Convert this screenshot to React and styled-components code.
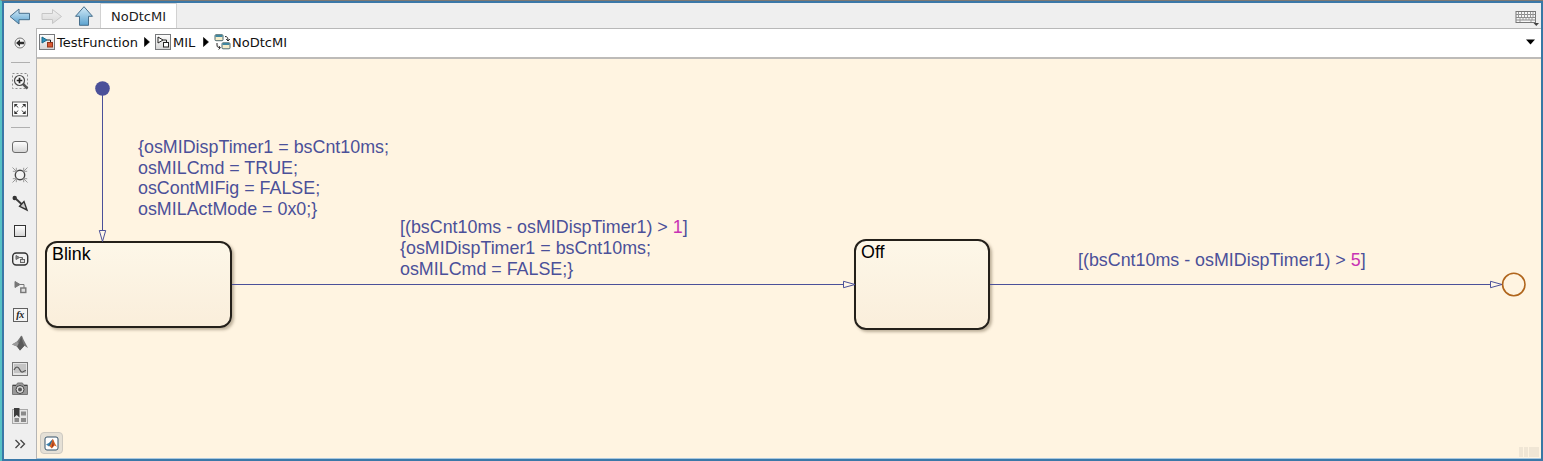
import React from 'react';
import styled, { createGlobalStyle } from 'styled-components';

const GlobalStyle = createGlobalStyle`
  * { box-sizing: border-box; }
  html, body { margin: 0; padding: 0; overflow: hidden; }
  svg { display: block; }
`;

const INK = '#4b5099';

const Window = styled.div`
  width: 1543px;
  height: 461px;
  display: flex;
  flex-direction: column;
  background: #efefef;
  border-left: 2px solid #57c2c6;
  border-top: 1px solid #7d7974;
  font-family: "DejaVu Sans", sans-serif;
`;

const Frame = styled.div`
  flex: 1;
  min-height: 0;
  display: flex;
  flex-direction: column;
  border: 2px solid #3a78a8;
  border-right-color: #3878a5;
`;

const TabBar = styled.div`
  height: 25px;
  flex: none;
  display: flex;
  align-items: stretch;
`;

const NavButtons = styled.div`
  width: 96px;
  display: flex;
  align-items: center;
  padding: 1px 0 0 5px;
  gap: 10px;
`;

const Tab = styled.div`
  width: 77px;
  border: 1px solid #d2d2d2;
  border-bottom: 0;
  background: #fff;
  font-size: 13px;
  line-height: 26px;
  text-align: center;
  color: #1c1c1c;
`;

const KeyboardSlot = styled.div`
  margin-left: auto;
  padding: 6px 2px 0 0;
`;

const Body = styled.div`
  flex: 1;
  min-height: 0;
  display: flex;
`;

const Palette = styled.div`
  width: 33px;
  flex: none;
  display: flex;
  flex-direction: column;
  align-items: center;
  border-right: 1px solid #b5b5b5;
`;

const Tool = styled.div`
  height: ${(p) => p.$h || 28}px;
  width: 100%;
  flex: none;
  display: flex;
  align-items: center;
  justify-content: center;
  margin-bottom: ${(p) => p.$gap || 0}px;
`;

const Divider = styled.div`
  width: 19px;
  height: 1px;
  margin: 4px 0 ${(p) => p.$after}px;
  flex: none;
  background: #b0b0b0;
`;

const Editor = styled.div`
  flex: 1;
  min-width: 0;
  display: flex;
  flex-direction: column;
`;

const PathBar = styled.div`
  height: 31px;
  flex: none;
  display: flex;
  align-items: center;
  background: #fff;
  border-top: 1px solid #b8b8b8;
  border-bottom: 2px solid #bdbbb8;
  padding: 0 6px 2px 2px;
`;

const Crumb = styled.div`
  display: flex;
  align-items: center;
  gap: ${(p) => (p.$gap === undefined ? 2 : p.$gap)}px;
  width: ${(p) => p.$w}px;
  padding-left: ${(p) => p.$pl || 0}px;
  font-size: 13px;
  color: #111;
  white-space: nowrap;
`;

const Caret = styled.div`
  margin-left: auto;
`;

const Canvas = styled.div`
  flex: 1;
  min-height: 0;
  position: relative;
  background: #fff4e1;
  font-family: "Liberation Sans", Arial, sans-serif;
  border-bottom: 1px solid #a9c8e0;
`;

const State = styled.div`
  position: absolute;
  left: ${(p) => p.$x}px;
  top: ${(p) => p.$y}px;
  width: ${(p) => p.$w}px;
  height: ${(p) => p.$h}px;
  border: 2px solid #24201a;
  border-radius: 12px;
  background: linear-gradient(#fdf7e8, #faeedb);
  box-shadow: 2px 2px 3px rgba(90, 75, 50, 0.4);
  padding: 1px 5px;
  font-size: 17.85px;
  line-height: 20px;
  color: #000;
`;

const Wires = styled.svg`
  position: absolute;
  left: 0;
  top: 0;
`;

const Label = styled.div`
  position: absolute;
  left: ${(p) => p.$x}px;
  top: ${(p) => p.$y}px;
  font-size: 17.86px;
  line-height: 20.7px;
  color: ${INK};
  white-space: pre;
`;

const Num = styled.span`
  color: #c832b4;
`;

const Badge = styled.div`
  position: absolute;
  left: 3px;
  bottom: 4px;
  width: 23px;
  height: 22px;
  display: flex;
  align-items: center;
  justify-content: center;
  border: 1px solid #cdc9c1;
  border-radius: 4px;
  background: #e5e0d6;
`;

const Grip = styled.div`
  position: absolute;
  right: 2px;
  bottom: 1px;
  display: flex;
  gap: 1px;
`;

const GripCell = styled.div`
  width: ${(p) => p.$w}px;
  height: 10px;
  background: #f0e6d5;
`;

const Icon = ({ w = 18, h = 18, children }) => (
  <svg width={w} height={h} viewBox={`0 0 ${w} ${h}`} fill="none">{children}</svg>
);

const Gradients = () => (
  <svg width="0" height="0">
    <defs>
      <linearGradient id="blue" x1="0" y1="0" x2="0" y2="1">
        <stop offset="0" stopColor="#d3ebf8" /><stop offset="1" stopColor="#5ba2cf" />
      </linearGradient>
      <linearGradient id="pale" x1="0" y1="0" x2="0" y2="1">
        <stop offset="0" stopColor="#f1f1f1" /><stop offset="1" stopColor="#d9d9d9" />
      </linearGradient>
      <linearGradient id="grey" x1="0" y1="0" x2="0" y2="1">
        <stop offset="0" stopColor="#ffffff" /><stop offset="1" stopColor="#d4d4d4" />
      </linearGradient>
    </defs>
  </svg>
);

const Hidden = styled.div`
  height: 0;
  overflow: hidden;
`;

const BackArrow = () => (
  <Icon w={22} h={17}><path d="M1 8.500 10 1v4.300h10.500v6.400H10V16z" fill="url(#blue)" stroke="#476f8c" strokeLinejoin="round" /></Icon>
);
const ForwardArrow = () => (
  <Icon w={22} h={17}><path d="M20.500 8.500 11.500 1.500v4H1v6h10.500v4z" fill="url(#pale)" stroke="#c6c6c6" strokeLinejoin="round" /></Icon>
);
const UpArrow = () => (
  <Icon w={21} h={20}><path d="M11 .7 19.500 10.300h-4v9H6.500v-9h-4z" fill="url(#blue)" stroke="#476f8c" strokeLinejoin="round" /></Icon>
);
const Keyboard = () => (
  <Icon w={24} h={17}>
    <rect x="1" y="2.500" width="19.500" height="11" fill="#f7f7f7" stroke="#777" />
    <path d="M1 5.500h19.500M1 8.500h19.500M1 11h19.500" stroke="#8a8a8a" />
    <path d="M3.500 3v5M6.500 3v5M9.500 3v5M12.500 3v5M15.500 3v5M18 3v5M5 8v3M8 8v3M11 8v3M14 8v3M17 8v3M5 11v2M16 11v2" stroke="#9a9a9a" />
    <path d="M18.500 14h5.500l-2.700 3z" fill="#444" />
  </Icon>
);

const ModelIcon = ({ color }) => (
  <Icon w={16} h={16}>
    <rect x=".5" y=".5" width="15" height="15" fill="url(#grey)" stroke="#77797c" />
    <path d="M3 3v6l5-3z" fill={color ? '#2d91bd' : '#fff'} stroke={color ? '#1b6888' : '#222'} />
    <path d="M8 6h3.500v3" stroke="#222" />
    <rect x="8.500" y="8.500" width="5" height="4.500" fill={color ? '#d95a32' : '#fff'} stroke={color ? '#94351b' : '#222'} />
  </Icon>
);
const ChartIcon = () => (
  <Icon w={17} h={16}>
    <rect x="1" y=".7" width="8" height="6" rx="1" fill="#f5edcb" stroke="#4f6b70" />
    <path d="M1.500 2h7" stroke="#3f86a0" strokeWidth="2" />
    <rect x="8" y="8.800" width="8" height="6" rx="1" fill="#f5edcb" stroke="#4f6b70" />
    <path d="M8.500 10h7" stroke="#3f86a0" strokeWidth="2" />
    <path d="M11 2.500c2.500 0 3 1.500 3 4M12.200 5l1.800 2 1.800-2M3 9v2c0 2 1 2.700 3 2.700M4.700 11.900l1.700 1.800-1.700 1.800" stroke="#222" />
  </Icon>
);
const Play = () => <Icon w={6} h={10}><path d="M.5.5 5.500 5 .5 9.500z" fill="#000" stroke="#000" strokeWidth=".6" /></Icon>;

const Collapse = () => (
  <Icon w={12} h={12}>
    <circle cx="6" cy="6" r="5" fill="#f6f6f6" stroke="#777" />
    <path d="M2 6 6 2.500v2.200h4v2.600H6v2.200z" fill="#2c2c2c" />
  </Icon>
);
const ZoomIn = () => (
  <Icon>
    <rect x="1.500" y="1.500" width="15" height="15" stroke="#8c8c8c" strokeDasharray="2 2" />
    <path d="m12 12 4.500 4.500" stroke="#555" strokeWidth="2.500" />
    <circle cx="8.500" cy="8.500" r="5" fill="#f7f7f7" stroke="#4a4a4a" strokeWidth="1.200" />
    <path d="M8.500 5.700v5.600M5.700 8.500h5.600" stroke="#222" strokeWidth="1.700" />
  </Icon>
);
const Fit = () => (
  <Icon>
    <rect x="1.500" y="2" width="15" height="14" fill="#fcfcfc" stroke="#555" />
    <path d="m4 4.500 3.300 3M14 4.500l-3.300 3M4 13.500l3.300-3m6.700 3-3.300-3" stroke="#444" />
    <path d="M3.300 7.500V4h3.500zM14.700 7.500V4h-3.500zM3.300 10.500V14h3.500zM14.700 10.500V14h-3.500z" fill="#333" />
  </Icon>
);
const StateTool = () => <Icon><rect x="1.500" y="3.500" width="15" height="11" rx="2.500" fill="url(#grey)" stroke="#6c6c6c" /></Icon>;
const Junction = () => (
  <Icon>
    <circle cx="9" cy="9" r="4.700" fill="#f4f4f4" stroke="#444" strokeWidth="1.400" />
    <path d="m1.500 1.500 3.800 3.800m0-3.500v3.500H1.800M16.500 1.500l-3.800 3.800m0-3.500v3.500h3.500M1.500 16.500l3.800-3.800m0 3.500v-3.500H1.800M16.500 16.500l-3.800-3.800m0 3.500v-3.500h3.500" stroke="#999" />
  </Icon>
);
const Transition = () => (
  <Icon>
    <circle cx="3.700" cy="4" r="2.200" fill="#333" />
    <path d="m4 4 7 6.500" stroke="#3a3a3a" strokeWidth="1.900" />
    <path d="m8.600 12.300 4.400-4.800 3 8.500z" fill="#ccc" stroke="#333" strokeWidth="1.400" />
  </Icon>
);
const BoxTool = () => <Icon><rect x="3.500" y="3.500" width="11" height="11" fill="url(#grey)" stroke="#333" /></Icon>;
const SimState = () => (
  <Icon>
    <rect x="1.700" y="3" width="15" height="12" rx="3.500" fill="#f2f2f2" stroke="#333" strokeWidth="1.400" />
    <path d="M5 5.500v4L8.500 7.500zM8.500 7.500h3V9" fill="#888" stroke="#666" />
    <rect x="9.500" y="9.500" width="4" height="3" fill="#ddd" stroke="#666" />
  </Icon>
);
const SimFunction = () => (
  <Icon>
    <path d="M4 3.500v6L9 6.500z" fill="#777" stroke="#777" />
    <path d="M9 6.500h4V10" stroke="#777" />
    <rect x="9.800" y="10" width="5" height="4.500" fill="#ddd" stroke="#777" strokeWidth="1.400" />
  </Icon>
);
const FxText = styled.div`
  width: 15px;
  height: 14px;
  border: 1px solid #606060;
  background: #f4f4f4;
  font: italic bold 10px/11px "Liberation Serif", serif;
  letter-spacing: -0.5px;
  text-align: center;
  color: #222;
`;
const Matlab = () => (
  <Icon>
    <path d="m1 10.500 5-3 4-5.500c1-.8 1.500.5 2.500 3.500L17 14l-3.600-2.200L9 16.500l-3-4z" fill="#777" />
    <path d="M10 2c-.8 4-1.500 6.500-4 10.500L9 16.500l4.400-4.700c-1.900-3-2.200-6.800-3.400-9.800z" fill="#5a5a5a" />
    <path d="m6 7.500 1.500 2L6 12.500l-5-2z" fill="#9a9a9a" />
  </Icon>
);
const Picture = () => (
  <Icon>
    <rect x="1.500" y="2.500" width="15" height="13" fill="#e4e4e4" stroke="#777" />
    <rect x="3" y="4" width="12" height="9" fill="#c4c4c4" />
    <path d="M3 10c2-4 4-4 6 0s3 1 6 .5" stroke="#555" strokeWidth="1.200" />
  </Icon>
);
const Camera = () => (
  <Icon w={18} h={14}>
    <path d="M1.500 3h4l1-2h5l1 2h4v9.500h-15z" fill="#999" stroke="#777" />
    <circle cx="9" cy="7.500" r="4" fill="#ddd" stroke="#444" />
    <circle cx="9" cy="7.500" r="2" fill="#555" />
    <path d="M2 3.500h3m8 0h3" stroke="#444" />
  </Icon>
);
const Library = () => (
  <Icon>
    <rect x="1.500" y="2.500" width="15" height="14" fill="#e6e6e6" stroke="#a8a8a8" />
    <path d="M10 4.500h5v4h-5zM10 11h5v4h-5zM3.500 11H8v4H3.500z" fill="#8a8a8a" />
    <path d="M3 1h5.500v9.500L5.700 8 3 10.500z" fill="#3c3c3c" />
  </Icon>
);
const More = () => <Icon w={12} h={12}><path d="m1.500 2 4 4-4 4M6.500 2l4 4-4 4" stroke="#444" strokeWidth="1.300" /></Icon>;

const MatlabBadge = () => (
  <Icon w={15} h={15}>
    <rect x="1" y="1" width="13" height="13" rx="2" fill="#fff" stroke="#35536b" />
    <path d="m2 8.500 3.200-1.700 1.300 1.400L5 10.500z" fill="#3d84b0" />
    <path d="M5.200 6.800 8.700 3 7 10H5z" fill="#346d95" />
    <path d="M8.700 2.800C9.700 4 11 8 13 10.800l-2.500-1.200-2.700 3L5.300 10C7.200 8.500 8 5.500 8.700 2.800z" fill="#dc6b28" />
    <path d="M8.700 3c.2 3-.3 5-1.200 9l2.200-2.500C9.500 7 9.300 5 8.700 3z" fill="#9d3320" />
  </Icon>
);

export default function App() {
  return (
    <>
      <GlobalStyle />
      <Hidden><Gradients /></Hidden>
      <Window>
        <Frame>
          <TabBar>
            <NavButtons><BackArrow /><ForwardArrow /><UpArrow /></NavButtons>
            <Tab>NoDtcMI</Tab>
            <KeyboardSlot><Keyboard /></KeyboardSlot>
          </TabBar>
          <Body>
            <Palette>
              <Tool $h={30}><Collapse /></Tool>
              <Divider $after={4} />
              <Tool><ZoomIn /></Tool>
              <Tool><Fit /></Tool>
              <Divider $after={5} />
              <Tool><StateTool /></Tool>
              <Tool><Junction /></Tool>
              <Tool><Transition /></Tool>
              <Tool><BoxTool /></Tool>
              <Tool><SimState /></Tool>
              <Tool><SimFunction /></Tool>
              <Tool><FxText>fx</FxText></Tool>
              <Tool><Matlab /></Tool>
              <Tool $h={23}><Picture /></Tool>
              <Tool $h={17} $gap={5}><Camera /></Tool>
              <Tool><Library /></Tool>
              <Tool><More /></Tool>
            </Palette>
            <Editor>
              <PathBar>
                <Crumb $w={105}><ModelIcon color />TestFunction</Crumb>
                <Play />
                <Crumb $w={53} $pl={5}><ModelIcon />MIL</Crumb>
                <Play />
                <Crumb $w={90} $pl={5} $gap={1}><ChartIcon />NoDtcMI</Crumb>
                <Caret><Icon w={9} h={6}><path d="M0 .5h9L4.500 5.500z" fill="#000" /></Icon></Caret>
              </PathBar>
              <Canvas>
                <State $x={8} $y={182} $w={187} $h={87}>Blink</State>
                <State $x={817} $y={180} $w={136} $h={91}>Off</State>
                <Wires width="1504" height="398" viewBox="37 59 1504 398" fill="none" stroke={INK}>
                  <circle cx="102.500" cy="88.500" r="7.300" fill={INK} stroke="none" />
                  <path d="M102.500 88v142M232 284.500h611.500M990 284.500h501" />
                  <path d="M99.300 230.500h6.400l-3.200 11zM843.500 281.300v6.400l11.500-3.200zM1490.500 281.300v6.400l11.500-3.200z" fill="#fff6e8" />
                  <circle cx="1513.800" cy="284.500" r="11.200" stroke="#b0651c" strokeWidth="1.600" />
                </Wires>
                <Label $x={101} $y={78}>{'{osMIDispTimer1 = bsCnt10ms;\nosMILCmd = TRUE;\nosContMIFig = FALSE;\nosMILActMode = 0x0;}'}</Label>
                <Label $x={363} $y={158.4}>
                  [(bsCnt10ms - osMIDispTimer1) &gt; <Num>1</Num>]{'\n{osMIDispTimer1 = bsCnt10ms;\nosMILCmd = FALSE;}'}
                </Label>
                <Label $x={1041} $y={191}>[(bsCnt10ms - osMIDispTimer1) &gt; <Num>5</Num>]</Label>
                <Badge><MatlabBadge /></Badge>
                <Grip><GripCell $w={4} /><GripCell $w={4} /><GripCell $w={10} /></Grip>
              </Canvas>
            </Editor>
          </Body>
        </Frame>
      </Window>
    </>
  );
}
